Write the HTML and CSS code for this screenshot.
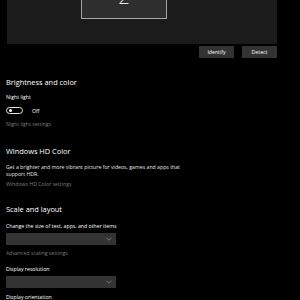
FILE: index.html
```html
<!DOCTYPE html>
<html lang="en">
<head>
  <meta charset="UTF-8">
  <title>Display settings</title>
  <link rel="stylesheet" href="styles.css">
</head>
<body>

<!-- Display arrangement -->
<div class="display-box">
  <div class="monitor"><span class="monitor-num">2</span></div>
</div>
<div class="display-actions">
  <button class="btn">Identify</button>
  <button class="btn">Detect</button>
</div>

<!-- Brightness and color -->
<h2 class="section-title first">Brightness and color</h2>
<div class="label night-label">Night light</div>
<div class="toggle-row">
  <span class="toggle"><span class="knob"></span></span>
  <span class="toggle-text">Off</span>
</div>
<div class="link night-link">Night light settings</div>

<!-- HD color -->
<h2 class="section-title hd-title">Windows HD Color</h2>
<p class="desc">Get a brighter and more vibrant picture for videos, games and apps that support HDR.</p>
<div class="link hd-link">Windows HD Color settings</div>

<!-- Scale and layout -->
<h2 class="section-title scale-title">Scale and layout</h2>
<div class="label scale-label">Change the size of text, apps, and other items</div>
<div class="dropdown first-drop">
  <svg width="6" height="4" viewBox="0 0 6 4"><path d="M0.5 0.8 L3 3.2 L5.5 0.8" fill="none" stroke="#8a8a8a" stroke-width="0.8"/></svg>
</div>
<div class="link adv-link">Advanced scaling settings</div>
<div class="label res-label">Display resolution</div>
<div class="dropdown second-drop">
  <svg width="6" height="4" viewBox="0 0 6 4"><path d="M0.5 0.8 L3 3.2 L5.5 0.8" fill="none" stroke="#8a8a8a" stroke-width="0.8"/></svg>
</div>
<div class="label orient-label">Display orientation</div>

</body>
</html>
```

FILE: styles.css
```css
body {
  margin: 0;
  padding: 0 0 0 6px;
  background-color: #000;
  color: #fff;
  font-family: 'Open Sans', sans-serif;
  overflow: hidden;
  height: 300px;
}

.display-box {
  width: 270px;
  height: 44px;
  margin-left: 1px;
  background-color: #1b1b1b;
}

.monitor {
  display: flex;
  justify-content: center;
  width: 84px;
  height: 18px;
  margin-left: 74px;
  background-color: #2e2e2e;
  border: 1px solid #a8a8a8;
  border-top: none;
  overflow: hidden;
}

.monitor-num {
  font-size: 20px;
  line-height: 20px;
  font-weight: 300;
  color: #e6e6e6;
  margin-top: -13px;
}

.display-actions {
  display: flex;
  justify-content: flex-end;
  gap: 8px;
  width: 271px;
  margin-top: 2px;
}

.btn {
  width: 35px;
  height: 12px;
  padding: 0;
  border: none;
  background-color: #333;
  color: #fff;
  font-family: 'Open Sans', sans-serif;
  font-size: 5.2px;
}

.section-title {
  margin: 0;
  height: 10px;
  line-height: 10px;
  font-size: 7.4px;
  font-weight: 400;
}

.section-title.first { margin-top: 19px; }
.hd-title { margin-top: 18px; }
.scale-title { margin-top: 16px; }

.label, .link, .desc {
  font-size: 5.2px;
  line-height: 7px;
}

.link { color: #7c7c7c; }

.night-label { margin-top: 7px; }
.night-link { margin-top: 7px; }

.toggle-row {
  display: flex;
  align-items: center;
  height: 7px;
  margin-top: 6px;
}

.toggle {
  display: flex;
  align-items: center;
  box-sizing: border-box;
  width: 17px;
  height: 7px;
  padding-left: 2px;
  border: 1px solid #e6e6e6;
  border-radius: 4px;
}

.knob {
  width: 3px;
  height: 3px;
  border-radius: 50%;
  background-color: #fff;
}

.toggle-text {
  margin-left: 9px;
  font-size: 5.2px;
}

.desc {
  margin: 8px 0 0;
  width: 185px;
  color: #e6e6e6;
}

.hd-link { margin-top: 3px; }
.scale-label { margin-top: 8.5px; }

.dropdown {
  display: flex;
  align-items: center;
  justify-content: flex-end;
  box-sizing: border-box;
  width: 110px;
  height: 12px;
  padding-right: 4px;
  background-color: #333;
}

.first-drop { margin-top: 3.5px; }
.adv-link { margin-top: 4.5px; }
.res-label { margin-top: 9px; }
.second-drop { margin-top: 3.5px; }
.orient-label { margin-top: 5.5px; }
```
